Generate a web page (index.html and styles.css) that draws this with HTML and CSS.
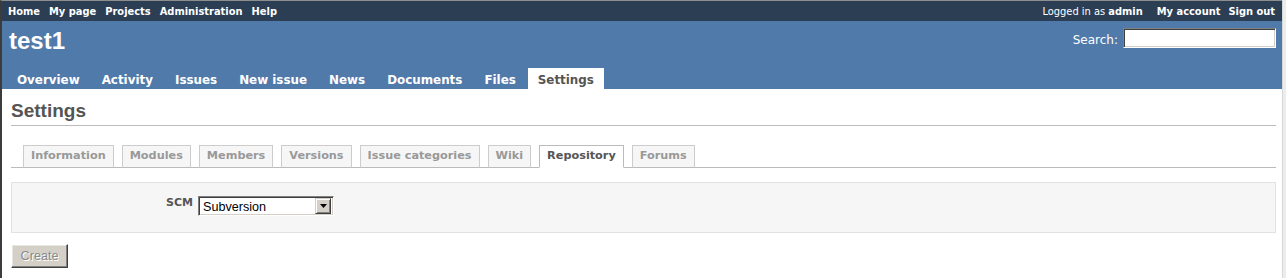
FILE: index.html
```html
<!DOCTYPE html>
<html lang="en">
<head>
  <meta charset="UTF-8" />
  <title>Settings - test1</title>
  <link rel="stylesheet" href="styles.css">
</head>
<body>
<div class="window">
  <div class="page">

    <!-- Top menu -->
    <div id="top-menu">
      <ul class="menu-left">
        <li><a href="#">Home</a></li>
        <li><a href="#">My page</a></li>
        <li><a href="#">Projects</a></li>
        <li><a href="#">Administration</a></li>
        <li><a href="#">Help</a></li>
      </ul>
      <div class="account">
        <span class="loggedas">Logged in as <b>admin</b></span>
        <a href="#">My account</a>
        <a href="#">Sign out</a>
      </div>
    </div>

    <!-- Header -->
    <div id="header">
      <div class="header-top">
        <h1>test1</h1>
        <div class="quick-search">
          <label>Search:</label>
          <input type="text" class="win-input" />
        </div>
      </div>
      <ul id="main-menu">
        <li><a href="#">Overview</a></li>
        <li><a href="#">Activity</a></li>
        <li><a href="#">Issues</a></li>
        <li><a href="#">New issue</a></li>
        <li><a href="#">News</a></li>
        <li><a href="#">Documents</a></li>
        <li><a href="#">Files</a></li>
        <li><a href="#" class="selected">Settings</a></li>
      </ul>
    </div>

    <!-- Content -->
    <div id="content">
      <h2>Settings</h2>

      <ul class="tabs">
        <li><a href="#">Information</a></li>
        <li><a href="#">Modules</a></li>
        <li><a href="#">Members</a></li>
        <li><a href="#">Versions</a></li>
        <li><a href="#">Issue categories</a></li>
        <li><a href="#">Wiki</a></li>
        <li><a href="#" class="selected">Repository</a></li>
        <li><a href="#">Forums</a></li>
      </ul>

      <form onsubmit="event.preventDefault();">
        <div class="box tabular">
          <p>
            <label>SCM</label>
            <span class="win-select">
              <span class="value">Subversion</span>
              <span class="drop">
                <svg width="7" height="4" viewBox="0 0 7 4"><path d="M0 0h7L3.5 4z" fill="#000"/></svg>
              </span>
            </span>
          </p>
        </div>
        <button type="submit" class="win-button" disabled>Create</button>
      </form>
    </div>

  </div>
  <div class="edge"></div>
</div>
</body>
</html>
```

FILE: styles.css
```css
:root {
  --top: #2b3e54;
  --header: #507aaa;
  --face: #d4d0c8;
}

* {
  margin: 0;
  padding: 0;
  box-sizing: border-box;
}

body {
  background: #fff;
  font-family: "DejaVu Sans", Verdana, sans-serif;
  font-size: 12px;
  color: #505050;
}

a {
  text-decoration: none;
  color: inherit;
}

ul {
  list-style: none;
}

.window {
  display: flex;
  height: 278px;
  overflow: hidden;
}

.page {
  flex: 1;
  border-left: 2px solid #3c3c3c;
  border-top: 1px solid #8e8e8e;
}

.edge {
  width: 4px;
  background: #ececec;
  border-left: 1px solid #d8d8d8;
}

/* top menu */
#top-menu {
  display: flex;
  justify-content: space-between;
  align-items: center;
  height: 20px;
  padding: 0 7px 0 6px;
  background: var(--top);
  color: #fff;
  font-size: 9.9px;
  font-weight: bold;
}

#top-menu ul {
  display: flex;
  gap: 9px;
}

.account {
  display: flex;
  gap: 8px;
}

.loggedas {
  font-weight: normal;
  margin-right: 6px;
}

/* header */
#header {
  display: flex;
  flex-direction: column;
  justify-content: space-between;
  height: 68px;
  background: var(--header);
  color: #fff;
}

.header-top {
  display: flex;
  justify-content: space-between;
  align-items: flex-start;
}

#header h1 {
  padding: 8px 0 0 7px;
  font-family: "Liberation Sans", Arial, sans-serif;
  font-size: 24px;
  line-height: 24px;
  font-weight: bold;
}

.quick-search {
  display: flex;
  align-items: center;
  gap: 5px;
  padding: 7px 6px 0 0;
}

.quick-search label {
  padding-top: 3px;
  font-size: 12px;
}

.win-input {
  width: 153px;
  height: 20px;
  background: #fff;
  border: 1px solid;
  border-color: #808080 #fff #fff #808080;
  box-shadow: inset 1px 1px 0 #404040, inset -1px -1px 0 var(--face);
  outline: none;
}

#main-menu {
  display: flex;
  padding-left: 3px;
}

#main-menu li {
  margin-left: 2px;
}

#main-menu a {
  display: block;
  height: 21px;
  padding: 3px 10px 0;
  line-height: 18px;
  font-size: 11.9px;
  font-weight: bold;
  color: #fff;
}

#main-menu a.selected {
  background: #fff;
  color: #555;
}

/* content */
#content {
  padding: 12px 6px 0 9px;
}

#content h2 {
  height: 25px;
  padding-bottom: 4px;
  border-bottom: 1px solid #bbb;
  font-family: "Liberation Sans", Arial, sans-serif;
  font-size: 19px;
  line-height: 20px;
  font-weight: bold;
  color: #555;
}

.tabs {
  display: flex;
  height: 23px;
  margin-top: 19px;
  padding-left: 4px;
  border-bottom: 1px solid #bbb;
}

.tabs li {
  margin-left: 8px;
}

.tabs a {
  display: block;
  height: 23px;
  padding: 0 7px;
  border: 1px solid #ccc;
  border-bottom-color: #bbb;
  background: #f6f6f6;
  font-size: 11.25px;
  font-weight: bold;
  line-height: 20px;
  color: #999;
}

.tabs a.selected {
  background: #fff;
  border-color: #bbb;
  border-bottom-color: #fff;
  color: #555;
}

.box {
  margin-top: 14px;
  padding: 0 6px;
  background: #f6f6f6;
  border: 1px solid #e2e2e2;
}

.tabular p {
  display: flex;
  align-items: flex-start;
  padding: 13px 0 16px;
}

.tabular label {
  width: 175px;
  margin: 1px 5px 0 0;
  text-align: right;
  font-size: 11px;
  line-height: 12px;
  font-weight: bold;
  color: #555;
}

.win-select {
  display: flex;
  align-items: center;
  justify-content: space-between;
  width: 136px;
  height: 20px;
  padding: 0 2px 0 4px;
  background: #fff;
  border: 1px solid;
  border-color: #808080 #fff #fff #808080;
  box-shadow: inset 1px 1px 0 #404040, inset -1px -1px 0 var(--face);
  font-family: "Liberation Sans", Arial, sans-serif;
  font-size: 12.6px;
  color: #000;
}

.win-select .value {
  padding-top: 1px;
}

.win-select .drop {
  display: flex;
  align-items: center;
  justify-content: center;
  width: 16px;
  height: 16px;
  background: var(--face);
  border: 1px solid;
  border-color: var(--face) #404040 #404040 var(--face);
  box-shadow: inset 1px 1px 0 #fff, inset -1px -1px 0 #808080;
}

.win-button {
  width: 57px;
  height: 24px;
  margin-top: 11px;
  background: var(--face);
  border: 1px solid;
  border-color: #fff #404040 #404040 #fff;
  box-shadow: inset -1px -1px 0 #808080, inset 1px 1px 0 #e8e6e0;
  font-family: "Liberation Sans", Arial, sans-serif;
  font-size: 12.6px;
  color: #8a8a8a;
  text-shadow: 1px 1px 0 #fff;
}
```
